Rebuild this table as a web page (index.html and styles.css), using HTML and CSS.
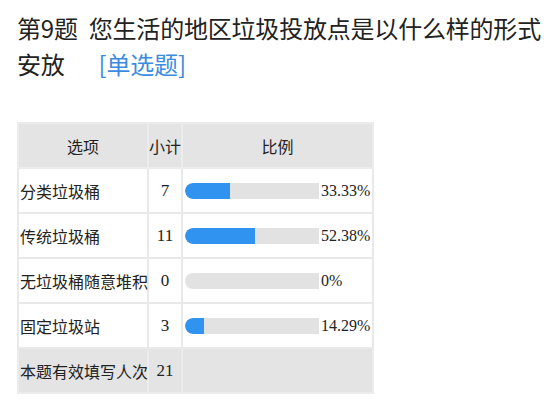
FILE: index.html
```html
<!DOCTYPE html>
<html lang="zh">
<head>
<meta charset="utf-8">
<link rel="stylesheet" href="styles.css">
</head>
<body>
<div class="page">
  <div class="title">
    <div class="tline"><span class="qno">第9题</span><span>您生活的地区垃圾投放点是以什么样的形式</span></div>
    <div class="tline"><span>安放</span><span class="qtype">[单选题]</span></div>
  </div>
  <table class="stats">
    <colgroup><col class="c1"><col class="c2"><col class="c3"></colgroup>
    <thead>
      <tr><th>选项</th><th>小计</th><th>比例</th></tr>
    </thead>
    <tbody>
      <tr><td class="opt">分类垃圾桶</td><td class="num">7</td><td><div class="ratio"><div class="track"><div class="fill" style="width:33.33%"></div></div><span class="pct">33.33%</span></div></td></tr>
      <tr><td class="opt">传统垃圾桶</td><td class="num">11</td><td><div class="ratio"><div class="track"><div class="fill" style="width:52.38%"></div></div><span class="pct">52.38%</span></div></td></tr>
      <tr><td class="opt">无垃圾桶随意堆积</td><td class="num">0</td><td><div class="ratio"><div class="track"><div class="fill" style="width:0%"></div></div><span class="pct">0%</span></div></td></tr>
      <tr><td class="opt">固定垃圾站</td><td class="num">3</td><td><div class="ratio"><div class="track"><div class="fill" style="width:14.29%"></div></div><span class="pct">14.29%</span></div></td></tr>
      <tr class="total"><td class="opt">本题有效填写人次</td><td class="num">21</td><td></td></tr>
    </tbody>
  </table>
</div>
</body>
</html>
```
FILE: styles.css
```css
html, body {
  margin: 0;
  padding: 0;
  background: #ffffff;
}
.page {
  padding: 10px 0 0 17px;
  font-family: "Noto Sans CJK SC", "Noto Sans", sans-serif;
  color: #222222;
}
.title {
  font-size: 24px;
  line-height: 36px;
  letter-spacing: -0.2px;
}
.tline {
  white-space: nowrap;
}
.qno {
  margin-right: 11px;
}
.qtype {
  color: #3b8be0;
  margin-left: 34px;
}
.stats {
  margin-top: 40px;
  width: 355px;
  border-collapse: collapse;
  table-layout: fixed;
  font-size: 16px;
}
.c1 { width: 130px; }
.c2 { width: 34px; }
.c3 { width: 191px; }
.stats th, .stats td {
  border: 2px solid #e9e9e9;
  height: 43px;
  padding: 0;
  vertical-align: middle;
}
.stats th {
  background: #e4e4e4;
  font-weight: normal;
  text-align: center;
  border-color: #ececec;
}
.stats td.opt {
  padding-left: 1px;
  white-space: nowrap;
  text-align: left;
}
.stats td.num {
  text-align: center;
  font-family: "Liberation Serif", serif;
  font-size: 17px;
}
.stats tr.total td {
  background: #e4e4e4;
  border-color: #ececec;
}
.ratio {
  display: flex;
  align-items: center;
  padding-left: 2px;
}
.track {
  width: 134px;
  height: 16px;
  background: #e2e2e2;
  border-radius: 8px 0 0 8px;
  overflow: hidden;
  flex: none;
}
.fill {
  height: 100%;
  background: #2f93ef;
  border-radius: 8px 0 0 8px;
}
.pct {
  margin-left: 2px;
  font-family: "Liberation Serif", serif;
  font-size: 16px;
  white-space: nowrap;
}
```
